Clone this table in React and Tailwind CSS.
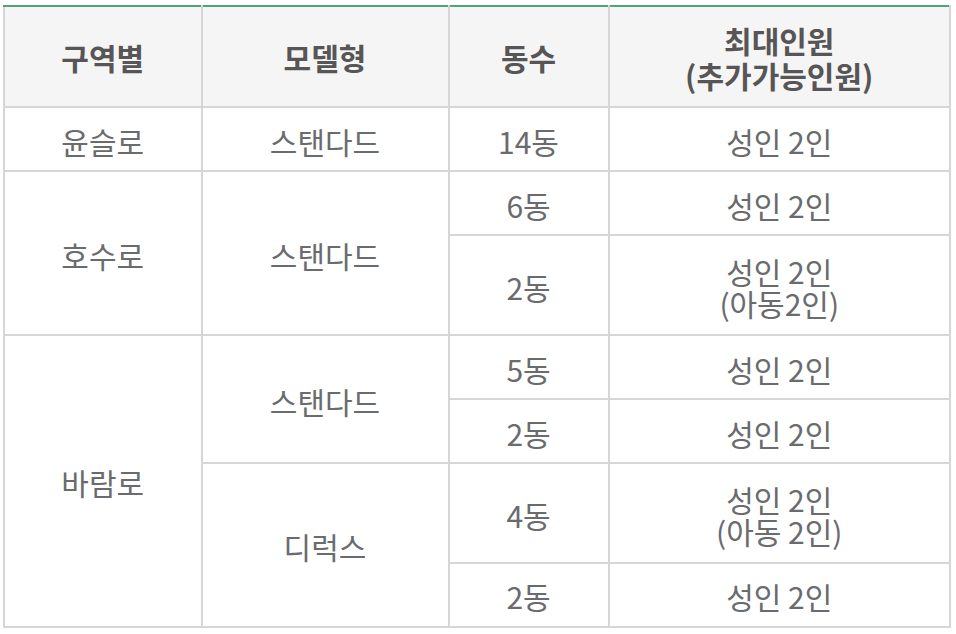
export default function App() {
  const th =
    "border-x-2 border-b-2 border-t-2 border-x-[#d6d6d6] border-b-[#d6d6d6] border-t-[#4fa57a] bg-[#f5f5f5] text-center align-middle font-bold text-[#575555] leading-[35px] pt-[2px]";
  const td =
    "border-2 border-[#d6d6d6] text-center align-middle text-[#696b6d] leading-[32px] pt-[3px]";

  return (
    <div className="w-[956px] h-[634px] bg-white pl-[3px] pt-[5px] font-['Noto_Sans_CJK_KR','Noto_Sans',sans-serif] text-[30px]">
      <table className="w-[948px] border-collapse table-fixed">
        <colgroup>
          <col className="w-[197.5px]" />
          <col className="w-[247px]" />
          <col className="w-[160px]" />
          <col className="w-[341.5px]" />
        </colgroup>
        <thead>
          <tr className="h-[101px]">
            <th className={th}>구역별</th>
            <th className={th}>모델형</th>
            <th className={th}>동수</th>
            <th className={th}>
              최대인원
              <br />
              (추가가능인원)
            </th>
          </tr>
        </thead>
        <tbody>
          {/* 윤슬로 */}
          <tr className="h-[64px]">
            <td className={td}>윤슬로</td>
            <td className={td}>스탠다드</td>
            <td className={td}>14동</td>
            <td className={td}>성인 2인</td>
          </tr>

          {/* 호수로 */}
          <tr className="h-[64px]">
            <td className={td} rowSpan={2}>호수로</td>
            <td className={td} rowSpan={2}>스탠다드</td>
            <td className={td}>6동</td>
            <td className={td}>성인 2인</td>
          </tr>
          <tr className="h-[100px]">
            <td className={td}>2동</td>
            <td className={td}>
              성인 2인
              <br />
              (아동2인)
            </td>
          </tr>

          {/* 바람로 */}
          <tr className="h-[64px]">
            <td className={td} rowSpan={4}>바람로</td>
            <td className={td} rowSpan={2}>스탠다드</td>
            <td className={td}>5동</td>
            <td className={td}>성인 2인</td>
          </tr>
          <tr className="h-[64px]">
            <td className={td}>2동</td>
            <td className={td}>성인 2인</td>
          </tr>
          <tr className="h-[100px]">
            <td className={td} rowSpan={2}>디럭스</td>
            <td className={td}>4동</td>
            <td className={td}>
              성인 2인
              <br />
              (아동 2인)
            </td>
          </tr>
          <tr className="h-[63.5px]">
            <td className={td}>2동</td>
            <td className={td}>성인 2인</td>
          </tr>
        </tbody>
      </table>
    </div>
  );
}
